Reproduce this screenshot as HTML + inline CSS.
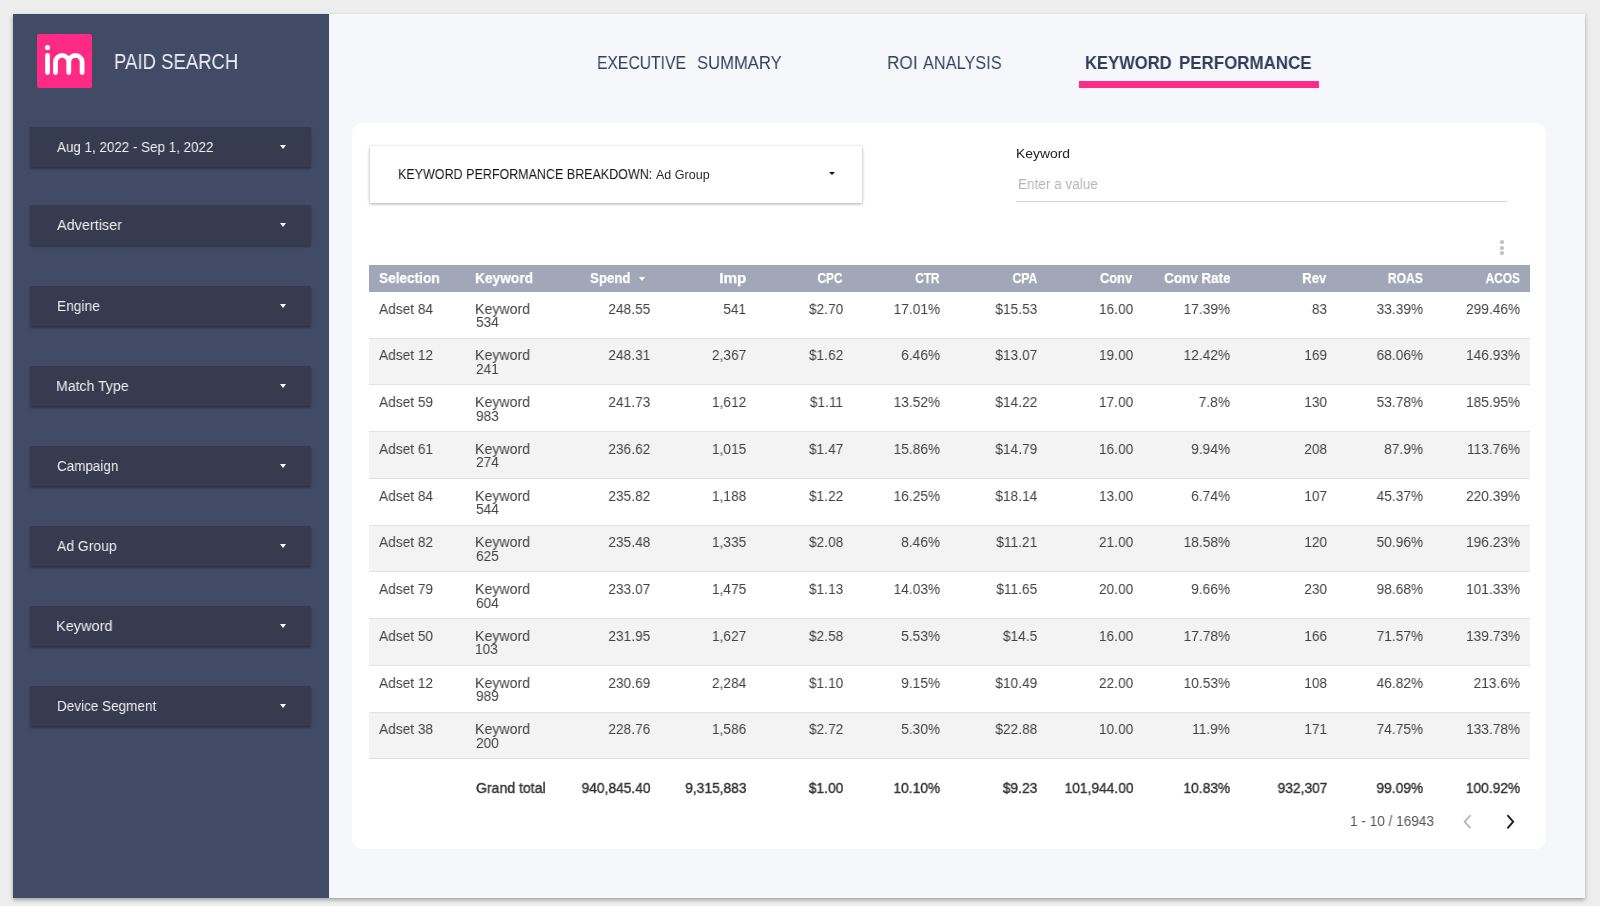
<!DOCTYPE html><html><head><meta charset="utf-8"><style>
*{margin:0;padding:0;box-sizing:border-box}
html,body{width:1600px;height:906px;overflow:hidden;background:#ededed;font-family:"Liberation Sans",sans-serif}
.a{position:absolute;white-space:nowrap;will-change:transform}
#page{position:absolute;left:12.5px;top:14px;width:1572.5px;height:883.8px;background:#f6f7fb;box-shadow:0 1.5px 4px rgba(0,0,0,0.32)}
#side{position:absolute;left:12.5px;top:14px;width:316.5px;height:883.8px;background:#424b66}
.logo{position:absolute;left:37px;top:34px;width:55px;height:54.4px;background:#fe2a85;border-radius:2px}
.flt{position:absolute;left:30px;width:281px;height:40px;background:#363b50;box-shadow:0 1.5px 2px rgba(0,0,0,0.3)}
.arr{position:absolute;width:0;height:0;border-left:3.3px solid transparent;border-right:3.3px solid transparent;border-top:4px solid #fff}
#card{position:absolute;left:352px;top:123px;width:1194px;height:726px;background:#fff;border-radius:11px}
.dd{position:absolute;left:370px;top:146px;width:492px;height:57px;background:#fff;box-shadow:0 1px 3px rgba(0,0,0,0.35)}
.hdr{position:absolute;left:369px;top:265px;width:1161px;height:27px;background:#a2a7b8}
.row{position:absolute;left:369px;width:1161px;border-bottom:1px solid #e2e2e2}
</style></head><body>
<div id="page"></div><div id="side"></div>
<div class="logo"><svg width="55" height="54" viewBox="0 0 55 54"><g stroke="#fff" stroke-width="4.8" stroke-linecap="round" fill="none"><line x1="10.5" y1="21.4" x2="10.5" y2="38.6"/><path d="M18.5 38.6 V28.05 A6.65 6.65 0 0 1 31.8 28.05 V38.6 M31.8 28.05 A6.65 6.65 0 0 1 45.1 28.05 V38.6"/></g><circle cx="10.5" cy="13.5" r="2.6" fill="#fff"/></svg></div>
<div class="a" style="font-size:21.74px;line-height:21.74px;color:#eceef3;top:51.40px;left:114.15px;transform:scaleX(0.8529);transform-origin:left;">PAID SEARCH</div>
<div class="flt" style="top:127.0px"></div>
<div class="a" style="font-size:15.22px;line-height:15.22px;color:#eeeff3;top:139.12px;left:57.40px;transform:scaleX(0.8802);transform-origin:left;">Aug 1, 2022 - Sep 1, 2022</div>
<div class="arr" style="left:279.6px;top:145.0px"></div>
<div class="flt" style="top:205.0px"></div>
<div class="a" style="font-size:15.22px;line-height:15.22px;color:#eeeff3;top:217.12px;left:57.40px;transform:scaleX(0.9483);transform-origin:left;">Advertiser</div>
<div class="arr" style="left:279.6px;top:223.0px"></div>
<div class="flt" style="top:285.5px"></div>
<div class="a" style="font-size:15.22px;line-height:15.22px;color:#eeeff3;top:297.62px;left:56.50px;transform:scaleX(0.9037);transform-origin:left;">Engine</div>
<div class="arr" style="left:279.6px;top:303.5px"></div>
<div class="flt" style="top:366.0px"></div>
<div class="a" style="font-size:15.22px;line-height:15.22px;color:#eeeff3;top:378.12px;left:56.47px;transform:scaleX(0.9262);transform-origin:left;">Match Type</div>
<div class="arr" style="left:279.6px;top:384.0px"></div>
<div class="flt" style="top:445.5px"></div>
<div class="a" style="font-size:15.22px;line-height:15.22px;color:#eeeff3;top:457.62px;left:57.40px;transform:scaleX(0.8838);transform-origin:left;">Campaign</div>
<div class="arr" style="left:279.6px;top:463.5px"></div>
<div class="flt" style="top:525.5px"></div>
<div class="a" style="font-size:15.22px;line-height:15.22px;color:#eeeff3;top:537.62px;left:57.40px;transform:scaleX(0.9153);transform-origin:left;">Ad Group</div>
<div class="arr" style="left:279.6px;top:543.5px"></div>
<div class="flt" style="top:606.0px"></div>
<div class="a" style="font-size:15.22px;line-height:15.22px;color:#eeeff3;top:618.12px;left:56.45px;transform:scaleX(0.9542);transform-origin:left;">Keyword</div>
<div class="arr" style="left:279.6px;top:624.0px"></div>
<div class="flt" style="top:686.0px"></div>
<div class="a" style="font-size:15.22px;line-height:15.22px;color:#eeeff3;top:698.12px;left:56.51px;transform:scaleX(0.8884);transform-origin:left;">Device Segment</div>
<div class="arr" style="left:279.6px;top:704.0px"></div>
<div class="a" style="font-size:19.2px;line-height:19.2px;color:#363f5c;top:52.75px;left:597.18px;transform:scaleX(0.8181);transform-origin:left;">EXECUTIVE</div>
<div class="a" style="font-size:19.2px;line-height:19.2px;color:#363f5c;top:52.75px;left:696.90px;transform:scaleX(0.8659);transform-origin:left;">SUMMARY</div>
<div class="a" style="font-size:19.2px;line-height:19.2px;color:#363f5c;top:52.75px;left:887.40px;transform:scaleX(0.8999);transform-origin:left;">ROI</div>
<div class="a" style="font-size:19.2px;line-height:19.2px;color:#363f5c;top:52.75px;left:922.70px;transform:scaleX(0.8502);transform-origin:left;">ANALYSIS</div>
<div class="a" style="font-size:19.2px;line-height:19.2px;color:#333c59;top:52.75px;font-weight:bold;left:1085.38px;transform:scaleX(0.8652);transform-origin:left;">KEYWORD</div>
<div class="a" style="font-size:19.2px;line-height:19.2px;color:#333c59;top:52.75px;font-weight:bold;left:1178.82px;transform:scaleX(0.8816);transform-origin:left;">PERFORMANCE</div>
<div class="a" style="left:1079px;top:80.8px;width:239.5px;height:6.6px;background:#fe2b87"></div>
<div id="card"></div>
<div class="dd"></div>
<div class="a" style="font-size:14.64px;line-height:14.64px;color:#141414;top:166.61px;left:398.05px;transform:scaleX(0.8550);transform-origin:left;">KEYWORD PERFORMANCE BREAKDOWN:</div>
<div class="a" style="font-size:12.54px;line-height:12.54px;color:#2a2a2a;top:168.98px;left:655.50px;">Ad Group</div>
<div class="arr" style="left:829.4px;top:171.8px;border-left-width:3px;border-right-width:3px;border-top-width:3.5px;border-top-color:#111"></div>
<div class="a" style="font-size:13.62px;line-height:13.62px;color:#222;top:147.37px;left:1015.83px;transform:scaleX(1.0218);transform-origin:left;">Keyword</div>
<div class="a" style="font-size:14.06px;line-height:14.06px;color:#b5b5b5;top:177.00px;left:1018.29px;transform:scaleX(0.9639);transform-origin:left;">Enter a value</div>
<div class="a" style="left:1016px;top:201px;width:491px;height:1px;background:#d6d6d6"></div>
<div class="a" style="left:1500.45px;top:239.80px;width:3.6px;height:3.6px;border-radius:50%;background:#c2c2c2"></div>
<div class="a" style="left:1500.45px;top:245.50px;width:3.6px;height:3.6px;border-radius:50%;background:#c2c2c2"></div>
<div class="a" style="left:1500.45px;top:251.20px;width:3.6px;height:3.6px;border-radius:50%;background:#c2c2c2"></div>
<div class="hdr"></div>
<div class="a" style="font-size:14.86px;line-height:14.86px;color:#fff;top:271.42px;font-weight:bold;left:378.75px;transform:scaleX(0.9169);transform-origin:left;-webkit-text-stroke:0.25px #fff;">Selection</div>
<div class="a" style="font-size:14.86px;line-height:14.86px;color:#fff;top:271.42px;font-weight:bold;left:474.58px;transform:scaleX(0.9242);transform-origin:left;-webkit-text-stroke:0.25px #fff;">Keyword</div>
<div class="a" style="font-size:14.86px;line-height:14.86px;color:#fff;top:271.42px;font-weight:bold;left:590.00px;transform:scaleX(0.8913);transform-origin:left;-webkit-text-stroke:0.25px #fff;">Spend</div>
<div class="arr" style="left:638.5px;top:276.5px;border-left-width:3.5px;border-right-width:3.5px"></div>
<div class="a" style="font-size:14.86px;line-height:14.86px;color:#fff;top:271.42px;font-weight:bold;right:853.92px;transform:scaleX(1.0300);transform-origin:right;-webkit-text-stroke:0.25px #fff;">Imp</div>
<div class="a" style="font-size:14.86px;line-height:14.86px;color:#fff;top:271.42px;font-weight:bold;right:757.21px;transform:scaleX(0.7901);transform-origin:right;-webkit-text-stroke:0.25px #fff;">CPC</div>
<div class="a" style="font-size:14.86px;line-height:14.86px;color:#fff;top:271.42px;font-weight:bold;right:660.21px;transform:scaleX(0.7953);transform-origin:right;-webkit-text-stroke:0.25px #fff;">CTR</div>
<div class="a" style="font-size:14.86px;line-height:14.86px;color:#fff;top:271.42px;font-weight:bold;right:563.22px;transform:scaleX(0.8153);transform-origin:right;-webkit-text-stroke:0.25px #fff;">CPA</div>
<div class="a" style="font-size:14.86px;line-height:14.86px;color:#fff;top:271.42px;font-weight:bold;right:467.64px;transform:scaleX(0.8658);transform-origin:right;-webkit-text-stroke:0.25px #fff;">Conv</div>
<div class="a" style="font-size:14.86px;line-height:14.86px;color:#fff;top:271.42px;font-weight:bold;right:369.76px;transform:scaleX(0.9014);transform-origin:right;-webkit-text-stroke:0.25px #fff;">Conv Rate</div>
<div class="a" style="font-size:14.86px;line-height:14.86px;color:#fff;top:271.42px;font-weight:bold;right:273.65px;transform:scaleX(0.8816);transform-origin:right;-webkit-text-stroke:0.25px #fff;">Rev</div>
<div class="a" style="font-size:14.86px;line-height:14.86px;color:#fff;top:271.42px;font-weight:bold;right:177.07px;transform:scaleX(0.8187);transform-origin:right;-webkit-text-stroke:0.25px #fff;">ROAS</div>
<div class="a" style="font-size:14.86px;line-height:14.86px;color:#fff;top:271.42px;font-weight:bold;right:80.07px;transform:scaleX(0.7996);transform-origin:right;-webkit-text-stroke:0.25px #fff;">ACOS</div>
<div class="row" style="top:292.00px;height:46.74px;background:#fff"></div>
<div class="a" style="font-size:14.49px;line-height:14.49px;color:#424242;top:301.73px;left:378.75px;transform:scaleX(0.9470);transform-origin:left;">Adset 84</div>
<div class="a" style="font-size:14.49px;line-height:14.49px;color:#424242;top:301.73px;left:474.52px;transform:scaleX(0.9765);transform-origin:left;">Keyword</div>
<div class="a" style="font-size:14.49px;line-height:14.49px;color:#424242;top:315.23px;left:475.50px;transform:scaleX(0.9470);transform-origin:left;">534</div>
<div class="a" style="font-size:14.49px;line-height:14.49px;color:#424242;top:301.73px;right:949.95px;transform:scaleX(0.9470);transform-origin:right;">248.55</div>
<div class="a" style="font-size:14.49px;line-height:14.49px;color:#424242;top:301.73px;right:853.95px;transform:scaleX(0.9470);transform-origin:right;">541</div>
<div class="a" style="font-size:14.49px;line-height:14.49px;color:#424242;top:301.73px;right:756.95px;transform:scaleX(0.9470);transform-origin:right;">$2.70</div>
<div class="a" style="font-size:14.49px;line-height:14.49px;color:#424242;top:301.73px;right:660.11px;transform:scaleX(0.9470);transform-origin:right;">17.01%</div>
<div class="a" style="font-size:14.49px;line-height:14.49px;color:#424242;top:301.73px;right:562.95px;transform:scaleX(0.9470);transform-origin:right;">$15.53</div>
<div class="a" style="font-size:14.49px;line-height:14.49px;color:#424242;top:301.73px;right:466.95px;transform:scaleX(0.9470);transform-origin:right;">16.00</div>
<div class="a" style="font-size:14.49px;line-height:14.49px;color:#424242;top:301.73px;right:370.11px;transform:scaleX(0.9470);transform-origin:right;">17.39%</div>
<div class="a" style="font-size:14.49px;line-height:14.49px;color:#424242;top:301.73px;right:272.95px;transform:scaleX(0.9470);transform-origin:right;">83</div>
<div class="a" style="font-size:14.49px;line-height:14.49px;color:#424242;top:301.73px;right:177.11px;transform:scaleX(0.9470);transform-origin:right;">33.39%</div>
<div class="a" style="font-size:14.49px;line-height:14.49px;color:#424242;top:301.73px;right:80.11px;transform:scaleX(0.9470);transform-origin:right;">299.46%</div>
<div class="row" style="top:338.74px;height:46.74px;background:#f3f3f3"></div>
<div class="a" style="font-size:14.49px;line-height:14.49px;color:#424242;top:348.47px;left:378.75px;transform:scaleX(0.9470);transform-origin:left;">Adset 12</div>
<div class="a" style="font-size:14.49px;line-height:14.49px;color:#424242;top:348.47px;left:474.52px;transform:scaleX(0.9765);transform-origin:left;">Keyword</div>
<div class="a" style="font-size:14.49px;line-height:14.49px;color:#424242;top:361.97px;left:475.50px;transform:scaleX(0.9470);transform-origin:left;">241</div>
<div class="a" style="font-size:14.49px;line-height:14.49px;color:#424242;top:348.47px;right:949.95px;transform:scaleX(0.9470);transform-origin:right;">248.31</div>
<div class="a" style="font-size:14.49px;line-height:14.49px;color:#424242;top:348.47px;right:853.95px;transform:scaleX(0.9470);transform-origin:right;">2,367</div>
<div class="a" style="font-size:14.49px;line-height:14.49px;color:#424242;top:348.47px;right:756.95px;transform:scaleX(0.9470);transform-origin:right;">$1.62</div>
<div class="a" style="font-size:14.49px;line-height:14.49px;color:#424242;top:348.47px;right:660.11px;transform:scaleX(0.9470);transform-origin:right;">6.46%</div>
<div class="a" style="font-size:14.49px;line-height:14.49px;color:#424242;top:348.47px;right:562.95px;transform:scaleX(0.9470);transform-origin:right;">$13.07</div>
<div class="a" style="font-size:14.49px;line-height:14.49px;color:#424242;top:348.47px;right:466.95px;transform:scaleX(0.9470);transform-origin:right;">19.00</div>
<div class="a" style="font-size:14.49px;line-height:14.49px;color:#424242;top:348.47px;right:370.11px;transform:scaleX(0.9470);transform-origin:right;">12.42%</div>
<div class="a" style="font-size:14.49px;line-height:14.49px;color:#424242;top:348.47px;right:272.95px;transform:scaleX(0.9470);transform-origin:right;">169</div>
<div class="a" style="font-size:14.49px;line-height:14.49px;color:#424242;top:348.47px;right:177.11px;transform:scaleX(0.9470);transform-origin:right;">68.06%</div>
<div class="a" style="font-size:14.49px;line-height:14.49px;color:#424242;top:348.47px;right:80.11px;transform:scaleX(0.9470);transform-origin:right;">146.93%</div>
<div class="row" style="top:385.48px;height:46.74px;background:#fff"></div>
<div class="a" style="font-size:14.49px;line-height:14.49px;color:#424242;top:395.21px;left:378.75px;transform:scaleX(0.9470);transform-origin:left;">Adset 59</div>
<div class="a" style="font-size:14.49px;line-height:14.49px;color:#424242;top:395.21px;left:474.52px;transform:scaleX(0.9765);transform-origin:left;">Keyword</div>
<div class="a" style="font-size:14.49px;line-height:14.49px;color:#424242;top:408.71px;left:475.50px;transform:scaleX(0.9470);transform-origin:left;">983</div>
<div class="a" style="font-size:14.49px;line-height:14.49px;color:#424242;top:395.21px;right:949.95px;transform:scaleX(0.9470);transform-origin:right;">241.73</div>
<div class="a" style="font-size:14.49px;line-height:14.49px;color:#424242;top:395.21px;right:853.95px;transform:scaleX(0.9470);transform-origin:right;">1,612</div>
<div class="a" style="font-size:14.49px;line-height:14.49px;color:#424242;top:395.21px;right:756.95px;transform:scaleX(0.9470);transform-origin:right;">$1.11</div>
<div class="a" style="font-size:14.49px;line-height:14.49px;color:#424242;top:395.21px;right:660.11px;transform:scaleX(0.9470);transform-origin:right;">13.52%</div>
<div class="a" style="font-size:14.49px;line-height:14.49px;color:#424242;top:395.21px;right:562.95px;transform:scaleX(0.9470);transform-origin:right;">$14.22</div>
<div class="a" style="font-size:14.49px;line-height:14.49px;color:#424242;top:395.21px;right:466.95px;transform:scaleX(0.9470);transform-origin:right;">17.00</div>
<div class="a" style="font-size:14.49px;line-height:14.49px;color:#424242;top:395.21px;right:370.11px;transform:scaleX(0.9470);transform-origin:right;">7.8%</div>
<div class="a" style="font-size:14.49px;line-height:14.49px;color:#424242;top:395.21px;right:272.95px;transform:scaleX(0.9470);transform-origin:right;">130</div>
<div class="a" style="font-size:14.49px;line-height:14.49px;color:#424242;top:395.21px;right:177.11px;transform:scaleX(0.9470);transform-origin:right;">53.78%</div>
<div class="a" style="font-size:14.49px;line-height:14.49px;color:#424242;top:395.21px;right:80.11px;transform:scaleX(0.9470);transform-origin:right;">185.95%</div>
<div class="row" style="top:432.22px;height:46.74px;background:#f3f3f3"></div>
<div class="a" style="font-size:14.49px;line-height:14.49px;color:#424242;top:441.95px;left:378.75px;transform:scaleX(0.9470);transform-origin:left;">Adset 61</div>
<div class="a" style="font-size:14.49px;line-height:14.49px;color:#424242;top:441.95px;left:474.52px;transform:scaleX(0.9765);transform-origin:left;">Keyword</div>
<div class="a" style="font-size:14.49px;line-height:14.49px;color:#424242;top:455.45px;left:475.50px;transform:scaleX(0.9470);transform-origin:left;">274</div>
<div class="a" style="font-size:14.49px;line-height:14.49px;color:#424242;top:441.95px;right:949.95px;transform:scaleX(0.9470);transform-origin:right;">236.62</div>
<div class="a" style="font-size:14.49px;line-height:14.49px;color:#424242;top:441.95px;right:853.95px;transform:scaleX(0.9470);transform-origin:right;">1,015</div>
<div class="a" style="font-size:14.49px;line-height:14.49px;color:#424242;top:441.95px;right:756.95px;transform:scaleX(0.9470);transform-origin:right;">$1.47</div>
<div class="a" style="font-size:14.49px;line-height:14.49px;color:#424242;top:441.95px;right:660.11px;transform:scaleX(0.9470);transform-origin:right;">15.86%</div>
<div class="a" style="font-size:14.49px;line-height:14.49px;color:#424242;top:441.95px;right:562.95px;transform:scaleX(0.9470);transform-origin:right;">$14.79</div>
<div class="a" style="font-size:14.49px;line-height:14.49px;color:#424242;top:441.95px;right:466.95px;transform:scaleX(0.9470);transform-origin:right;">16.00</div>
<div class="a" style="font-size:14.49px;line-height:14.49px;color:#424242;top:441.95px;right:370.11px;transform:scaleX(0.9470);transform-origin:right;">9.94%</div>
<div class="a" style="font-size:14.49px;line-height:14.49px;color:#424242;top:441.95px;right:272.95px;transform:scaleX(0.9470);transform-origin:right;">208</div>
<div class="a" style="font-size:14.49px;line-height:14.49px;color:#424242;top:441.95px;right:177.11px;transform:scaleX(0.9470);transform-origin:right;">87.9%</div>
<div class="a" style="font-size:14.49px;line-height:14.49px;color:#424242;top:441.95px;right:80.11px;transform:scaleX(0.9470);transform-origin:right;">113.76%</div>
<div class="row" style="top:478.96px;height:46.74px;background:#fff"></div>
<div class="a" style="font-size:14.49px;line-height:14.49px;color:#424242;top:488.69px;left:378.75px;transform:scaleX(0.9470);transform-origin:left;">Adset 84</div>
<div class="a" style="font-size:14.49px;line-height:14.49px;color:#424242;top:488.69px;left:474.52px;transform:scaleX(0.9765);transform-origin:left;">Keyword</div>
<div class="a" style="font-size:14.49px;line-height:14.49px;color:#424242;top:502.19px;left:475.50px;transform:scaleX(0.9470);transform-origin:left;">544</div>
<div class="a" style="font-size:14.49px;line-height:14.49px;color:#424242;top:488.69px;right:949.95px;transform:scaleX(0.9470);transform-origin:right;">235.82</div>
<div class="a" style="font-size:14.49px;line-height:14.49px;color:#424242;top:488.69px;right:853.95px;transform:scaleX(0.9470);transform-origin:right;">1,188</div>
<div class="a" style="font-size:14.49px;line-height:14.49px;color:#424242;top:488.69px;right:756.95px;transform:scaleX(0.9470);transform-origin:right;">$1.22</div>
<div class="a" style="font-size:14.49px;line-height:14.49px;color:#424242;top:488.69px;right:660.11px;transform:scaleX(0.9470);transform-origin:right;">16.25%</div>
<div class="a" style="font-size:14.49px;line-height:14.49px;color:#424242;top:488.69px;right:562.95px;transform:scaleX(0.9470);transform-origin:right;">$18.14</div>
<div class="a" style="font-size:14.49px;line-height:14.49px;color:#424242;top:488.69px;right:466.95px;transform:scaleX(0.9470);transform-origin:right;">13.00</div>
<div class="a" style="font-size:14.49px;line-height:14.49px;color:#424242;top:488.69px;right:370.11px;transform:scaleX(0.9470);transform-origin:right;">6.74%</div>
<div class="a" style="font-size:14.49px;line-height:14.49px;color:#424242;top:488.69px;right:272.95px;transform:scaleX(0.9470);transform-origin:right;">107</div>
<div class="a" style="font-size:14.49px;line-height:14.49px;color:#424242;top:488.69px;right:177.11px;transform:scaleX(0.9470);transform-origin:right;">45.37%</div>
<div class="a" style="font-size:14.49px;line-height:14.49px;color:#424242;top:488.69px;right:80.11px;transform:scaleX(0.9470);transform-origin:right;">220.39%</div>
<div class="row" style="top:525.70px;height:46.74px;background:#f3f3f3"></div>
<div class="a" style="font-size:14.49px;line-height:14.49px;color:#424242;top:535.43px;left:378.75px;transform:scaleX(0.9470);transform-origin:left;">Adset 82</div>
<div class="a" style="font-size:14.49px;line-height:14.49px;color:#424242;top:535.43px;left:474.52px;transform:scaleX(0.9765);transform-origin:left;">Keyword</div>
<div class="a" style="font-size:14.49px;line-height:14.49px;color:#424242;top:548.93px;left:475.50px;transform:scaleX(0.9470);transform-origin:left;">625</div>
<div class="a" style="font-size:14.49px;line-height:14.49px;color:#424242;top:535.43px;right:949.95px;transform:scaleX(0.9470);transform-origin:right;">235.48</div>
<div class="a" style="font-size:14.49px;line-height:14.49px;color:#424242;top:535.43px;right:853.95px;transform:scaleX(0.9470);transform-origin:right;">1,335</div>
<div class="a" style="font-size:14.49px;line-height:14.49px;color:#424242;top:535.43px;right:756.95px;transform:scaleX(0.9470);transform-origin:right;">$2.08</div>
<div class="a" style="font-size:14.49px;line-height:14.49px;color:#424242;top:535.43px;right:660.11px;transform:scaleX(0.9470);transform-origin:right;">8.46%</div>
<div class="a" style="font-size:14.49px;line-height:14.49px;color:#424242;top:535.43px;right:562.95px;transform:scaleX(0.9470);transform-origin:right;">$11.21</div>
<div class="a" style="font-size:14.49px;line-height:14.49px;color:#424242;top:535.43px;right:466.95px;transform:scaleX(0.9470);transform-origin:right;">21.00</div>
<div class="a" style="font-size:14.49px;line-height:14.49px;color:#424242;top:535.43px;right:370.11px;transform:scaleX(0.9470);transform-origin:right;">18.58%</div>
<div class="a" style="font-size:14.49px;line-height:14.49px;color:#424242;top:535.43px;right:272.95px;transform:scaleX(0.9470);transform-origin:right;">120</div>
<div class="a" style="font-size:14.49px;line-height:14.49px;color:#424242;top:535.43px;right:177.11px;transform:scaleX(0.9470);transform-origin:right;">50.96%</div>
<div class="a" style="font-size:14.49px;line-height:14.49px;color:#424242;top:535.43px;right:80.11px;transform:scaleX(0.9470);transform-origin:right;">196.23%</div>
<div class="row" style="top:572.44px;height:46.74px;background:#fff"></div>
<div class="a" style="font-size:14.49px;line-height:14.49px;color:#424242;top:582.17px;left:378.75px;transform:scaleX(0.9470);transform-origin:left;">Adset 79</div>
<div class="a" style="font-size:14.49px;line-height:14.49px;color:#424242;top:582.17px;left:474.52px;transform:scaleX(0.9765);transform-origin:left;">Keyword</div>
<div class="a" style="font-size:14.49px;line-height:14.49px;color:#424242;top:595.67px;left:475.50px;transform:scaleX(0.9470);transform-origin:left;">604</div>
<div class="a" style="font-size:14.49px;line-height:14.49px;color:#424242;top:582.17px;right:949.95px;transform:scaleX(0.9470);transform-origin:right;">233.07</div>
<div class="a" style="font-size:14.49px;line-height:14.49px;color:#424242;top:582.17px;right:853.95px;transform:scaleX(0.9470);transform-origin:right;">1,475</div>
<div class="a" style="font-size:14.49px;line-height:14.49px;color:#424242;top:582.17px;right:756.95px;transform:scaleX(0.9470);transform-origin:right;">$1.13</div>
<div class="a" style="font-size:14.49px;line-height:14.49px;color:#424242;top:582.17px;right:660.11px;transform:scaleX(0.9470);transform-origin:right;">14.03%</div>
<div class="a" style="font-size:14.49px;line-height:14.49px;color:#424242;top:582.17px;right:562.95px;transform:scaleX(0.9470);transform-origin:right;">$11.65</div>
<div class="a" style="font-size:14.49px;line-height:14.49px;color:#424242;top:582.17px;right:466.95px;transform:scaleX(0.9470);transform-origin:right;">20.00</div>
<div class="a" style="font-size:14.49px;line-height:14.49px;color:#424242;top:582.17px;right:370.11px;transform:scaleX(0.9470);transform-origin:right;">9.66%</div>
<div class="a" style="font-size:14.49px;line-height:14.49px;color:#424242;top:582.17px;right:272.95px;transform:scaleX(0.9470);transform-origin:right;">230</div>
<div class="a" style="font-size:14.49px;line-height:14.49px;color:#424242;top:582.17px;right:177.11px;transform:scaleX(0.9470);transform-origin:right;">98.68%</div>
<div class="a" style="font-size:14.49px;line-height:14.49px;color:#424242;top:582.17px;right:80.11px;transform:scaleX(0.9470);transform-origin:right;">101.33%</div>
<div class="row" style="top:619.18px;height:46.74px;background:#f3f3f3"></div>
<div class="a" style="font-size:14.49px;line-height:14.49px;color:#424242;top:628.91px;left:378.75px;transform:scaleX(0.9470);transform-origin:left;">Adset 50</div>
<div class="a" style="font-size:14.49px;line-height:14.49px;color:#424242;top:628.91px;left:474.52px;transform:scaleX(0.9765);transform-origin:left;">Keyword</div>
<div class="a" style="font-size:14.49px;line-height:14.49px;color:#424242;top:642.41px;left:474.55px;transform:scaleX(0.9470);transform-origin:left;">103</div>
<div class="a" style="font-size:14.49px;line-height:14.49px;color:#424242;top:628.91px;right:949.95px;transform:scaleX(0.9470);transform-origin:right;">231.95</div>
<div class="a" style="font-size:14.49px;line-height:14.49px;color:#424242;top:628.91px;right:853.95px;transform:scaleX(0.9470);transform-origin:right;">1,627</div>
<div class="a" style="font-size:14.49px;line-height:14.49px;color:#424242;top:628.91px;right:756.95px;transform:scaleX(0.9470);transform-origin:right;">$2.58</div>
<div class="a" style="font-size:14.49px;line-height:14.49px;color:#424242;top:628.91px;right:660.11px;transform:scaleX(0.9470);transform-origin:right;">5.53%</div>
<div class="a" style="font-size:14.49px;line-height:14.49px;color:#424242;top:628.91px;right:562.95px;transform:scaleX(0.9470);transform-origin:right;">$14.5</div>
<div class="a" style="font-size:14.49px;line-height:14.49px;color:#424242;top:628.91px;right:466.95px;transform:scaleX(0.9470);transform-origin:right;">16.00</div>
<div class="a" style="font-size:14.49px;line-height:14.49px;color:#424242;top:628.91px;right:370.11px;transform:scaleX(0.9470);transform-origin:right;">17.78%</div>
<div class="a" style="font-size:14.49px;line-height:14.49px;color:#424242;top:628.91px;right:272.95px;transform:scaleX(0.9470);transform-origin:right;">166</div>
<div class="a" style="font-size:14.49px;line-height:14.49px;color:#424242;top:628.91px;right:177.11px;transform:scaleX(0.9470);transform-origin:right;">71.57%</div>
<div class="a" style="font-size:14.49px;line-height:14.49px;color:#424242;top:628.91px;right:80.11px;transform:scaleX(0.9470);transform-origin:right;">139.73%</div>
<div class="row" style="top:665.92px;height:46.74px;background:#fff"></div>
<div class="a" style="font-size:14.49px;line-height:14.49px;color:#424242;top:675.65px;left:378.75px;transform:scaleX(0.9470);transform-origin:left;">Adset 12</div>
<div class="a" style="font-size:14.49px;line-height:14.49px;color:#424242;top:675.65px;left:474.52px;transform:scaleX(0.9765);transform-origin:left;">Keyword</div>
<div class="a" style="font-size:14.49px;line-height:14.49px;color:#424242;top:689.15px;left:475.50px;transform:scaleX(0.9470);transform-origin:left;">989</div>
<div class="a" style="font-size:14.49px;line-height:14.49px;color:#424242;top:675.65px;right:949.95px;transform:scaleX(0.9470);transform-origin:right;">230.69</div>
<div class="a" style="font-size:14.49px;line-height:14.49px;color:#424242;top:675.65px;right:853.95px;transform:scaleX(0.9470);transform-origin:right;">2,284</div>
<div class="a" style="font-size:14.49px;line-height:14.49px;color:#424242;top:675.65px;right:756.95px;transform:scaleX(0.9470);transform-origin:right;">$1.10</div>
<div class="a" style="font-size:14.49px;line-height:14.49px;color:#424242;top:675.65px;right:660.11px;transform:scaleX(0.9470);transform-origin:right;">9.15%</div>
<div class="a" style="font-size:14.49px;line-height:14.49px;color:#424242;top:675.65px;right:562.95px;transform:scaleX(0.9470);transform-origin:right;">$10.49</div>
<div class="a" style="font-size:14.49px;line-height:14.49px;color:#424242;top:675.65px;right:466.95px;transform:scaleX(0.9470);transform-origin:right;">22.00</div>
<div class="a" style="font-size:14.49px;line-height:14.49px;color:#424242;top:675.65px;right:370.11px;transform:scaleX(0.9470);transform-origin:right;">10.53%</div>
<div class="a" style="font-size:14.49px;line-height:14.49px;color:#424242;top:675.65px;right:272.95px;transform:scaleX(0.9470);transform-origin:right;">108</div>
<div class="a" style="font-size:14.49px;line-height:14.49px;color:#424242;top:675.65px;right:177.11px;transform:scaleX(0.9470);transform-origin:right;">46.82%</div>
<div class="a" style="font-size:14.49px;line-height:14.49px;color:#424242;top:675.65px;right:80.11px;transform:scaleX(0.9470);transform-origin:right;">213.6%</div>
<div class="row" style="top:712.66px;height:46.74px;background:#f3f3f3"></div>
<div class="a" style="font-size:14.49px;line-height:14.49px;color:#424242;top:722.39px;left:378.75px;transform:scaleX(0.9470);transform-origin:left;">Adset 38</div>
<div class="a" style="font-size:14.49px;line-height:14.49px;color:#424242;top:722.39px;left:474.52px;transform:scaleX(0.9765);transform-origin:left;">Keyword</div>
<div class="a" style="font-size:14.49px;line-height:14.49px;color:#424242;top:735.89px;left:475.50px;transform:scaleX(0.9470);transform-origin:left;">200</div>
<div class="a" style="font-size:14.49px;line-height:14.49px;color:#424242;top:722.39px;right:949.95px;transform:scaleX(0.9470);transform-origin:right;">228.76</div>
<div class="a" style="font-size:14.49px;line-height:14.49px;color:#424242;top:722.39px;right:853.95px;transform:scaleX(0.9470);transform-origin:right;">1,586</div>
<div class="a" style="font-size:14.49px;line-height:14.49px;color:#424242;top:722.39px;right:756.95px;transform:scaleX(0.9470);transform-origin:right;">$2.72</div>
<div class="a" style="font-size:14.49px;line-height:14.49px;color:#424242;top:722.39px;right:660.11px;transform:scaleX(0.9470);transform-origin:right;">5.30%</div>
<div class="a" style="font-size:14.49px;line-height:14.49px;color:#424242;top:722.39px;right:562.95px;transform:scaleX(0.9470);transform-origin:right;">$22.88</div>
<div class="a" style="font-size:14.49px;line-height:14.49px;color:#424242;top:722.39px;right:466.95px;transform:scaleX(0.9470);transform-origin:right;">10.00</div>
<div class="a" style="font-size:14.49px;line-height:14.49px;color:#424242;top:722.39px;right:370.11px;transform:scaleX(0.9470);transform-origin:right;">11.9%</div>
<div class="a" style="font-size:14.49px;line-height:14.49px;color:#424242;top:722.39px;right:272.95px;transform:scaleX(0.9470);transform-origin:right;">171</div>
<div class="a" style="font-size:14.49px;line-height:14.49px;color:#424242;top:722.39px;right:177.11px;transform:scaleX(0.9470);transform-origin:right;">74.75%</div>
<div class="a" style="font-size:14.49px;line-height:14.49px;color:#424242;top:722.39px;right:80.11px;transform:scaleX(0.9470);transform-origin:right;">133.78%</div>
<div class="a" style="font-size:14.49px;line-height:14.49px;color:#333;top:781.13px;left:475.50px;transform:scaleX(0.9714);transform-origin:left;-webkit-text-stroke:0.4px #333;">Grand total</div>
<div class="a" style="font-size:14.49px;line-height:14.49px;color:#333;top:781.13px;right:949.95px;transform:scaleX(0.9500);transform-origin:right;-webkit-text-stroke:0.4px #333;">940,845.40</div>
<div class="a" style="font-size:14.49px;line-height:14.49px;color:#333;top:781.13px;right:853.95px;transform:scaleX(0.9500);transform-origin:right;-webkit-text-stroke:0.4px #333;">9,315,883</div>
<div class="a" style="font-size:14.49px;line-height:14.49px;color:#333;top:781.13px;right:756.95px;transform:scaleX(0.9500);transform-origin:right;-webkit-text-stroke:0.4px #333;">$1.00</div>
<div class="a" style="font-size:14.49px;line-height:14.49px;color:#333;top:781.13px;right:660.12px;transform:scaleX(0.9500);transform-origin:right;-webkit-text-stroke:0.4px #333;">10.10%</div>
<div class="a" style="font-size:14.49px;line-height:14.49px;color:#333;top:781.13px;right:562.95px;transform:scaleX(0.9500);transform-origin:right;-webkit-text-stroke:0.4px #333;">$9.23</div>
<div class="a" style="font-size:14.49px;line-height:14.49px;color:#333;top:781.13px;right:466.95px;transform:scaleX(0.9500);transform-origin:right;-webkit-text-stroke:0.4px #333;">101,944.00</div>
<div class="a" style="font-size:14.49px;line-height:14.49px;color:#333;top:781.13px;right:370.12px;transform:scaleX(0.9500);transform-origin:right;-webkit-text-stroke:0.4px #333;">10.83%</div>
<div class="a" style="font-size:14.49px;line-height:14.49px;color:#333;top:781.13px;right:272.95px;transform:scaleX(0.9500);transform-origin:right;-webkit-text-stroke:0.4px #333;">932,307</div>
<div class="a" style="font-size:14.49px;line-height:14.49px;color:#333;top:781.13px;right:177.12px;transform:scaleX(0.9500);transform-origin:right;-webkit-text-stroke:0.4px #333;">99.09%</div>
<div class="a" style="font-size:14.49px;line-height:14.49px;color:#333;top:781.13px;right:80.12px;transform:scaleX(0.9500);transform-origin:right;-webkit-text-stroke:0.4px #333;">100.92%</div>
<div class="a" style="font-size:14.49px;line-height:14.49px;color:#555;top:813.93px;left:1349.66px;transform:scaleX(0.9396);transform-origin:left;">1 - 10 / 16943</div>
<svg class="a" style="left:1460px;top:812px" width="16" height="20" viewBox="0 0 16 20"><path d="M10.5 3.2 L4.6 9.75 L10.5 16.3" stroke="#b0b0b0" stroke-width="1.7" fill="none"/></svg>
<svg class="a" style="left:1502px;top:812px" width="16" height="20" viewBox="0 0 16 20"><path d="M5.4 3.2 L11.2 9.75 L5.4 16.3" stroke="#222" stroke-width="1.9" fill="none"/></svg>
</body></html>
